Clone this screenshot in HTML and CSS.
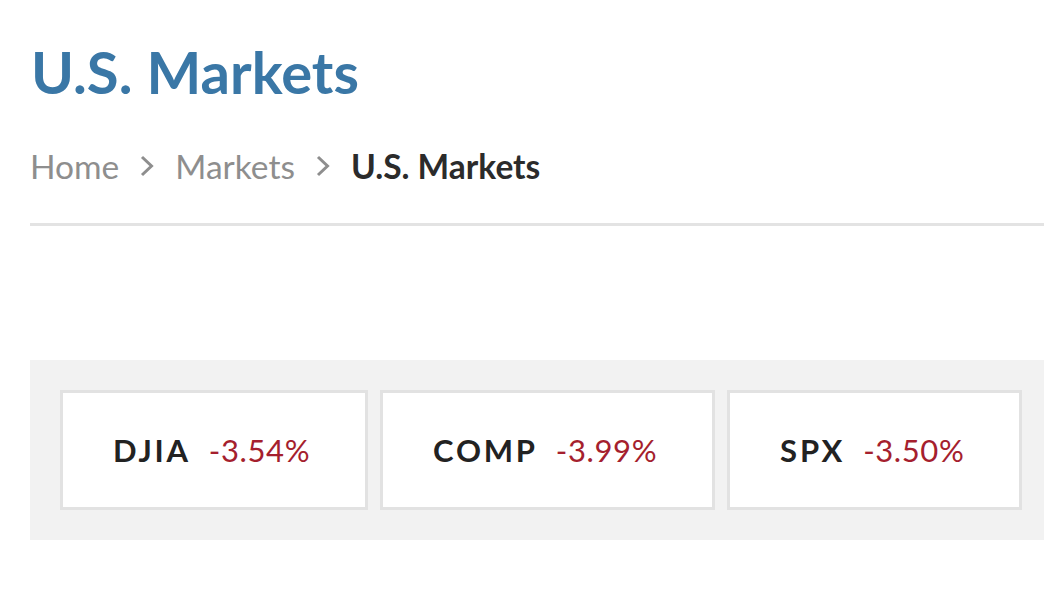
FILE: index.html
```html
<!DOCTYPE html>
<html lang="en">
<head>
<meta charset="utf-8">
<title>U.S. Markets</title>
<link rel="stylesheet" href="styles.css">
</head>
<body>
<main class="page">
  <h1 class="page-title">U.S. Markets</h1>
  <nav class="breadcrumb">
    <a class="crumb" href="#">Home</a>
    <svg class="chev" viewBox="0 0 14 22" width="14" height="22"><path d="M2 2 L11.5 11 L2 20" fill="none" stroke="#8e8e8e" stroke-width="3"/></svg>
    <a class="crumb" href="#">Markets</a>
    <svg class="chev" viewBox="0 0 14 22" width="14" height="22"><path d="M2 2 L11.5 11 L2 20" fill="none" stroke="#8e8e8e" stroke-width="3"/></svg>
    <span class="crumb current">U.S. Markets</span>
  </nav>
  <hr class="divider">
  <section class="tickers">
    <div class="ticker"><span class="sym">DJIA</span><span class="chg">-3.54%</span></div>
    <div class="ticker"><span class="sym">COMP</span><span class="chg">-3.99%</span></div>
    <div class="ticker"><span class="sym">SPX</span><span class="chg">-3.50%</span></div>
  </section>
</main>
</body>
</html>
```
FILE: styles.css
```css
* { box-sizing: border-box; }
html, body { margin: 0; padding: 0; background: #fff; }
body { font-family: Lato, "Open Sans", sans-serif; overflow: hidden; }
.page { padding: 37px 0 0 30px; }
.page-title {
  margin: 0 0 0 1px;
  font-size: 58px;
  font-weight: 700;
  color: #3a77a6;
  line-height: 70px;
}
.breadcrumb {
  display: flex;
  align-items: center;
  gap: 21px;
  margin: 39px 0 0 0;
  font-size: 33.5px;
  line-height: 40px;
}
.crumb { color: #8e8e8e; text-decoration: none; }
.crumb.current { color: #2b2b2b; font-weight: 700; }
.chev { display: block; }
.divider {
  border: 0;
  height: 3px;
  background: #e3e3e3;
  margin: 37px 0 0 0;
}
.tickers {
  display: flex;
  gap: 12px;
  margin-top: 134px;
  padding: 30px;
  background: #f2f2f2;
  width: 1014px;
}
.ticker {
  display: flex;
  align-items: center;
  gap: 18px;
  height: 120px;
  padding: 0 55px 0 50px;
  background: #fff;
  border: 3px solid #e2e2e2;
  font-size: 31px;
}
.sym { font-weight: 700; color: #222; letter-spacing: 2.8px; }
.chg { color: #a51f2e; letter-spacing: 0.6px; }
```
